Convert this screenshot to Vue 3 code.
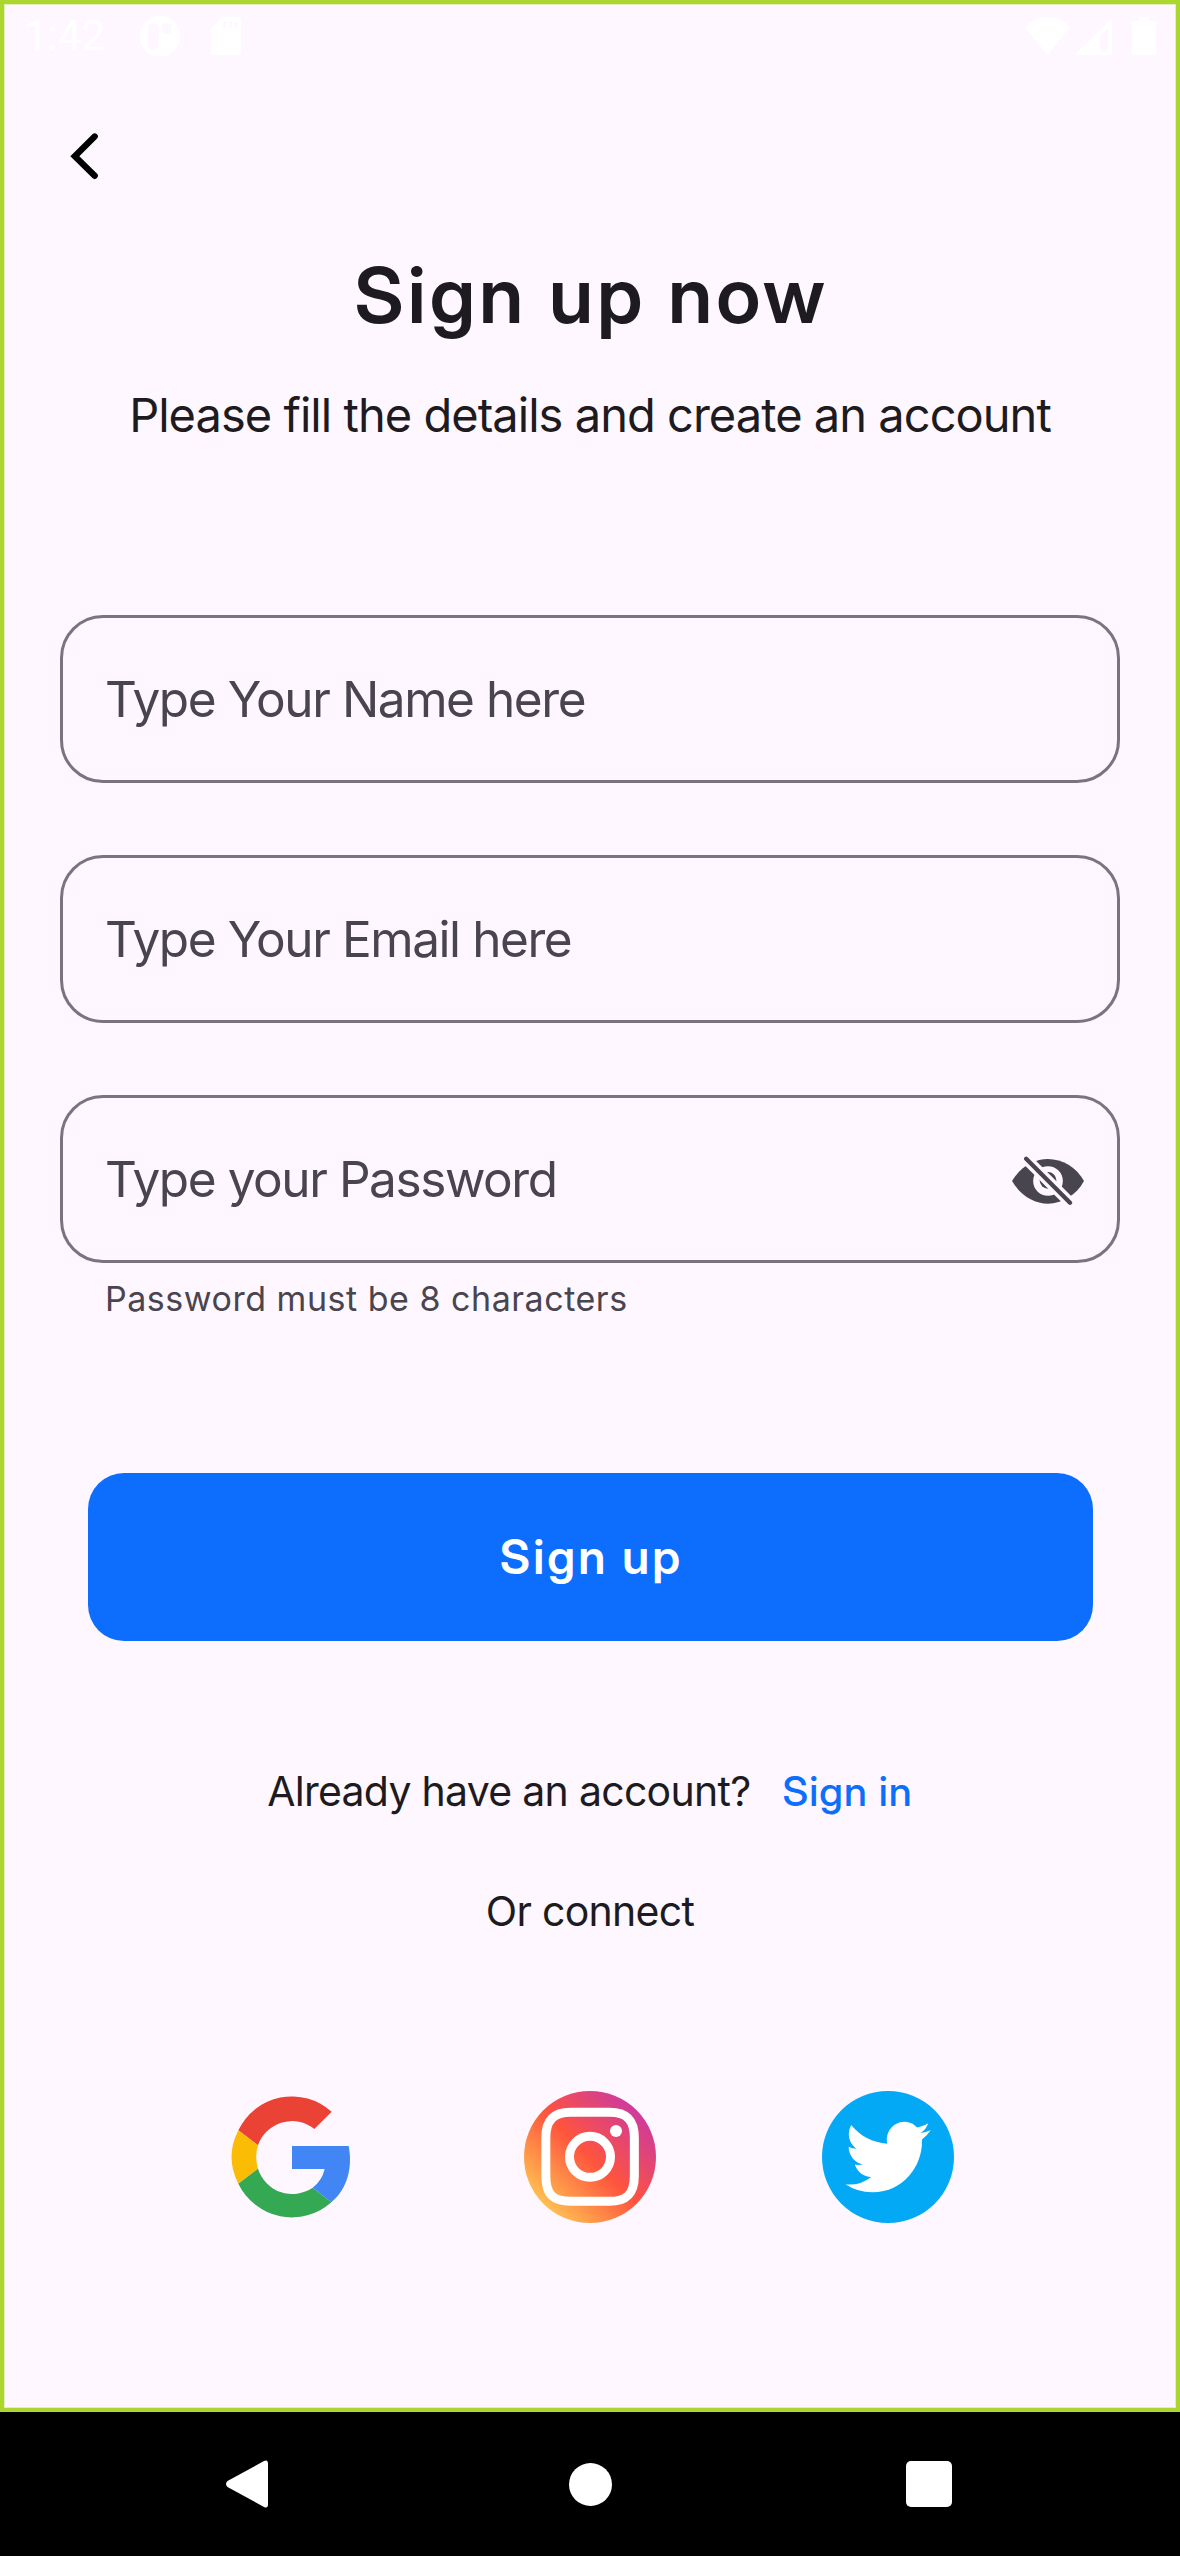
<script setup>
const fields = [
  { id: 'name', hint: 'Type Your Name here' },
  { id: 'email', hint: 'Type Your Email here' },
  { id: 'password', hint: 'Type your Password', secret: true },
]
</script>

<template>
  <div class="device">
    <main class="screen">
      <header class="status">
        <span class="clock">1:42</span>
        <svg class="ic-p" viewBox="0 0 42 42" width="42" height="42">
          <circle cx="21" cy="21" r="20.5" fill="#fff" />
          <rect x="9" y="8" width="11" height="27" rx="5.5" fill="#fef7ff" />
          <circle cx="27.5" cy="13.500" r="5.500" fill="#fef7ff" />
        </svg>
        <svg class="ic-sd" viewBox="0 0 30 38" width="30" height="38">
          <path d="M12 0H27a3 3 0 0 1 3 3V35a3 3 0 0 1-3 3H3a3 3 0 0 1-3-3V12Z" fill="#fff" />
          <path d="M12 4.500h3v6h-3zM18 4.500h3v6h-3zM23.500 4.500h3v6h-3z" fill="#fef7ff" />
        </svg>
        <span class="spacer"></span>
        <svg class="ic-wifi" viewBox="0 0 45 38" width="45" height="38">
          <path d="M0 10C13-3.300 32-3.300 45 10L22.500 38Z" fill="#fff" />
        </svg>
        <svg class="ic-signal" viewBox="0 0 37 37" width="37" height="37">
          <path fill-rule="evenodd" d="M37 0V37H0ZM33 10L25 18V33.500h8Z" fill="#fff" />
        </svg>
        <svg class="ic-battery" viewBox="0 0 24 38" width="24" height="38">
          <path d="M7 0h10v4h5a2 2 0 0 1 2 2v30a2 2 0 0 1-2 2H2a2 2 0 0 1-2-2V6a2 2 0 0 1 2-2h5z" fill="#fff" />
        </svg>
      </header>

      <nav class="top">
        <svg viewBox="210 396 90 144" width="30" height="48">
          <path d="M284 409.500L224.500 468.500L284 527.500" fill="none" stroke="#000" stroke-width="19" stroke-linecap="round" />
        </svg>
      </nav>

      <h1 class="title">Sign up now</h1>
      <p class="subtitle">Please fill the details and create an account</p>

      <form class="fields">
        <div v-for="f in fields" :key="f.id" class="field">
          <span class="hint" :class="f.id">{{ f.hint }}</span>
          <svg v-if="f.secret" class="eye" viewBox="150 219 228 156" width="76" height="52">
            <path d="M156 303C180 262 222 237 264 237S350 262 372 303C350 345 306 371 264 371S180 345 156 303Z" fill="#49454f" />
            <circle cx="264" cy="303" r="44.500" fill="#fef7ff" />
            <circle cx="264" cy="301" r="25" fill="#49454f" />
            <path d="M190 228L340 378" stroke="#fef7ff" stroke-width="33" />
            <path d="M198.500 236.500L330 368" stroke="#49454f" stroke-width="13" stroke-linecap="round" />
          </svg>
        </div>
      </form>
      <p class="helper">Password must be 8 characters</p>

      <button class="submit" type="button">Sign up</button>

      <p class="switch"><span class="ask">Already have an account?</span><a class="link">Sign in</a></p>
      <p class="connect">Or connect</p>

      <div class="social">
        <svg class="google" viewBox="78 63 396 396" width="132" height="132">
          <path d="M115 181A178 178 0 0 1 395 125L343 177A107.500 107.500 0 0 0 174 226Z" fill="#ea4335" />
          <path d="M115 181L174 226Q163 261 174 296L115 341Q74 261 115 181Z" fill="#fbbc05" />
          <path d="M115 341L174 296A107.500 107.500 0 0 0 338 353L394 397A178 178 0 0 1 115 341Z" fill="#34a853" />
          <path d="M446 228C458 290 444 355 394 397L338 353Q366 332 374 297H276V228Z" fill="#4285f4" />
        </svg>
        <svg viewBox="972 63 396 396" width="132" height="132">
          <defs>
            <linearGradient id="insta" gradientUnits="userSpaceOnUse" x1="1025" y1="406" x2="1325" y2="106">
              <stop offset="0" stop-color="#ffc252" />
              <stop offset=".48" stop-color="#ff543e" />
              <stop offset="1" stop-color="#ca38a4" />
            </linearGradient>
          </defs>
          <circle cx="1170" cy="261" r="198" fill="url(#insta)" />
          <g fill="none" stroke="#fff" stroke-width="27">
            <path d="M1112 127H1228C1285 127 1303 154 1303 203V318C1303 374 1278 394 1228 394H1112C1060 394 1037.500 374 1037.500 318V203C1037.500 151 1060 127 1112 127Z" />
            <circle cx="1170" cy="260.500" r="61.500" />
          </g>
          <circle cx="1248" cy="183" r="18" fill="#fff" />
        </svg>
        <svg viewBox="66 63 396 396" width="132" height="132">
          <circle cx="264" cy="261" r="198" fill="#03a9f4" />
          <path
            transform="translate(136 131) scale(10.67 10.85)"
            fill="#fff"
            d="M23.953 4.57a10 10 0 01-2.825.775 4.958 4.958 0 002.163-2.723c-.951.555-2.005.959-3.127 1.184a4.92 4.92 0 00-8.384 4.482C7.69 8.095 4.067 6.13 1.64 3.162a4.822 4.822 0 00-.666 2.475c0 1.71.87 3.213 2.188 4.096a4.904 4.904 0 01-2.228-.616v.06a4.923 4.923 0 003.946 4.827 4.996 4.996 0 01-2.212.085 4.936 4.936 0 004.604 3.417 9.867 9.867 0 01-6.102 2.105c-.39 0-.779-.023-1.17-.067a13.995 13.995 0 007.557 2.209c9.053 0 13.998-7.496 13.998-13.985 0-.21 0-.42-.015-.63A9.935 9.935 0 0024 4.59z"
          />
        </svg>
      </div>
    </main>

    <footer class="system">
      <svg class="sys-back" viewBox="0 0 42 48" width="42" height="48">
        <path d="M1.500 21L38 1Q42 -1 42 4V44Q42 49 38 47L1.500 27Q-1.500 24 1.500 21Z" fill="#fff" />
      </svg>
      <span class="sys-home"></span>
      <span class="sys-recent"></span>
    </footer>
  </div>
</template>

<style>
body {
  margin: 0;
  background: #000;
}
</style>

<style scoped>
.device {
  width: 1180px;
  height: 2556px;
  display: flex;
  flex-direction: column;
  overflow: hidden;
  background: #000;
  color: #1d1b20;
  font-family: Inter, 'Liberation Sans', sans-serif;
}
.device svg {
  display: block;
  flex: none;
}
.screen {
  box-sizing: border-box;
  height: 2412px;
  display: flex;
  flex-direction: column;
  background: #fef7ff;
  box-shadow: inset 0 0 0 4px #abd62d, inset 0 0 0 5px #e4eeb8;
}
h1,
p {
  margin: 0;
  white-space: nowrap;
}
.status {
  height: 72px;
  padding: 0 24px 0 24px;
  display: flex;
  align-items: center;
}
.clock {
  width: 115px;
  color: #fff;
  font: 42px/50px Roboto, sans-serif;
}
.ic-sd {
  margin-left: 30px;
}
.spacer {
  flex: 1;
}
.ic-signal {
  margin: 0 20px 0 5px;
}
.top {
  height: 168px;
  padding-left: 70px;
  display: flex;
  align-items: center;
}
.title,
.submit,
.link {
  font-family: 'Inter Display', Inter, sans-serif;
}
.title {
  margin-top: 10px;
  text-align: center;
  font-size: 77.5px;
  line-height: 91px;
  font-weight: 570;
  letter-spacing: 3.9px;
  text-indent: 3px;
}
.subtitle {
  margin-top: 44px;
  text-align: center;
  font-size: 47px;
  line-height: 60px;
  letter-spacing: -0.96px;
}
.fields {
  margin: 170px 60px 0;
  display: flex;
  flex-direction: column;
  gap: 72px;
}
.field {
  box-sizing: border-box;
  height: 168px;
  padding: 0 31px 0 42px;
  display: flex;
  align-items: center;
  justify-content: space-between;
  border: 3px solid #79747e;
  border-radius: 43px;
}
.hint {
  color: #49454f;
  font-size: 49.5px;
  line-height: 60px;
  letter-spacing: -1.42px;
  white-space: nowrap;
}
.helper {
  margin: 16px 0 0 105px;
  color: #49454f;
  font-size: 34px;
  line-height: 40px;
  letter-spacing: 0.52px;
}
.submit {
  margin: 154px 87px 0 88px;
  height: 168px;
  padding: 0;
  border: 0;
  border-radius: 36px;
  background: #0d6efd;
  color: #fff;
  font-size: 47.5px;
  font-weight: 580;
  line-height: 60px;
  letter-spacing: 3px;
  text-indent: 2px;
}
.switch {
  margin-top: 125px;
  display: flex;
  justify-content: center;
  gap: 32px;
  font-size: 41px;
  line-height: 50px;
  letter-spacing: -0.72px;
}
.link {
  color: #0d6efd;
  font-weight: 530;
  letter-spacing: 1.06px;
}
.connect {
  margin-top: 70px;
  text-align: center;
  font-size: 41px;
  line-height: 50px;
  letter-spacing: -0.7px;
}
.social {
  margin-top: 155px;
  display: flex;
  justify-content: center;
  gap: 166px;
}
.system {
  height: 144px;
  display: flex;
  align-items: center;
}
.sys-back {
  margin-left: 226px;
}
.sys-home {
  width: 43px;
  height: 43px;
  margin-left: 300.5px;
  border-radius: 50%;
  background: #fff;
}
.sys-recent {
  width: 45.5px;
  height: 45.5px;
  margin-left: 294.5px;
  border-radius: 5px;
  background: #fff;
}
</style>
